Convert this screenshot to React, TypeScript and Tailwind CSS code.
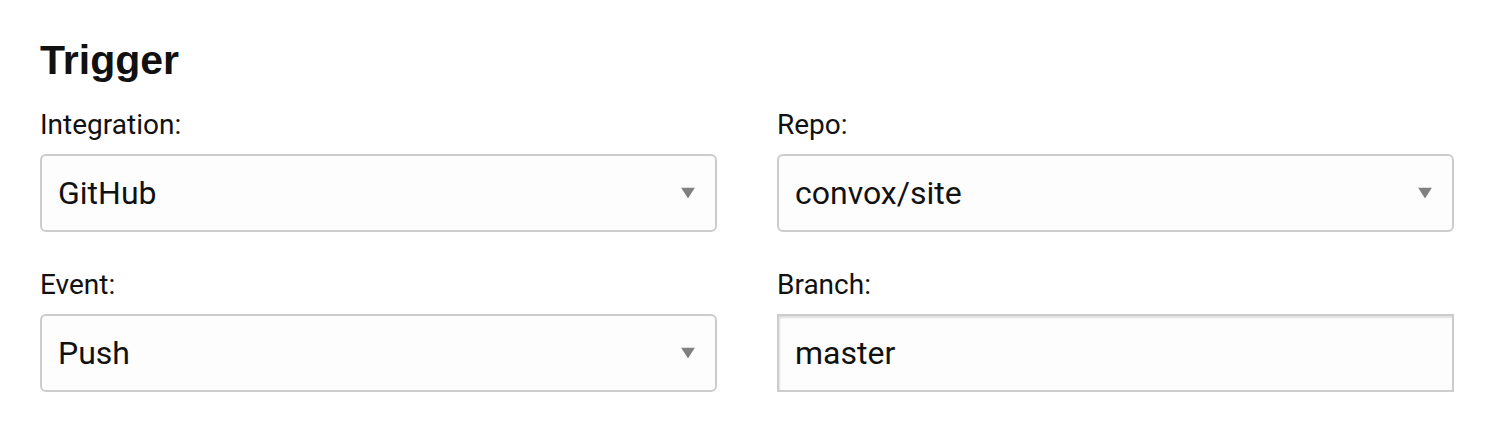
import type { ReactNode } from "react"

function Caret() {
  return (
    <svg width="14" height="11" viewBox="0 0 14 11" className="absolute right-[20px] top-1/2 -translate-y-1/2">
      <path d="M0 0 L14 0 L7 11 Z" fill="#808080" />
    </svg>
  )
}

function Field({ label, children }: { label: string; children: ReactNode }) {
  return (
    <div className="flex flex-col">
      <label className="text-[28px] leading-[34px] text-[#111] mb-[12px]">{label}</label>
      {children}
    </div>
  )
}

function Select({ value }: { value: string }) {
  return (
    <div className="relative h-[78px] rounded-[6px] border-2 border-[#cccccc] bg-[#fdfdfd] flex items-center px-[16px]">
      <span className="text-[32px] text-[#111]">{value}</span>
      <Caret />
    </div>
  )
}

function TextInput({ value }: { value: string }) {
  return (
    <div className="h-[78px] border-2 border-[#cccccc] bg-[#fdfdfd] shadow-[inset_1px_2px_2px_rgba(0,0,0,0.12)] flex items-center px-[16px]">
      <span className="text-[32px] text-[#111]">{value}</span>
    </div>
  )
}

export default function App() {
  return (
    <div className="w-[1494px] h-[424px] bg-white px-[40px] pt-[36px] font-['Roboto',sans-serif]">
      <h2 className="font-['Liberation_Sans',Arial,sans-serif] text-[41px] leading-[48px] font-bold text-[#111] mb-[24px]">
        Trigger
      </h2>
      <div className="grid grid-cols-2 gap-x-[60px] gap-y-[36px]">
        <Field label="Integration:">
          <Select value="GitHub" />
        </Field>
        <Field label="Repo:">
          <Select value="convox/site" />
        </Field>
        <Field label="Event:">
          <Select value="Push" />
        </Field>
        <Field label="Branch:">
          <TextInput value="master" />
        </Field>
      </div>
    </div>
  )
}
